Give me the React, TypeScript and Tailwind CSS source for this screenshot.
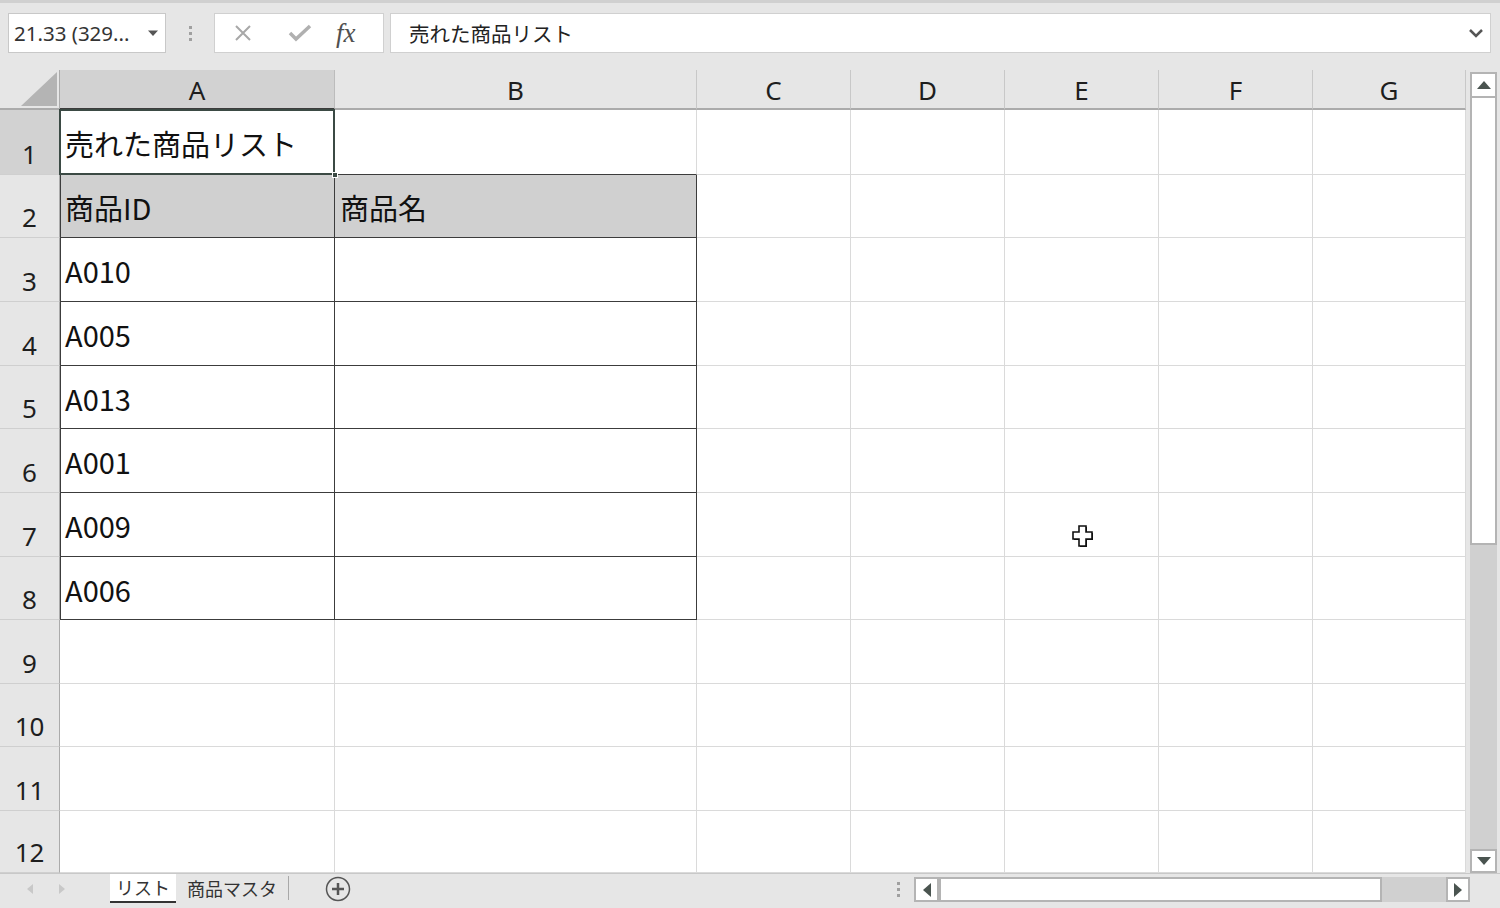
import React from 'react';

const cols = [
  { l: 'A', w: 'w-[275px]' },
  { l: 'B', w: 'w-[362px]' },
  { l: 'C', w: 'w-[154px]' },
  { l: 'D', w: 'w-[154px]' },
  { l: 'E', w: 'w-[154px]' },
  { l: 'F', w: 'w-[154px]' },
  { l: 'G', w: 'w-[153px]' },
];

const rows = [
  { n: 1, h: 'h-[65px]', a: '売れた商品リスト', b: '' },
  { n: 2, h: 'h-[63px]', a: '商品ID', b: '商品名' },
  { n: 3, h: 'h-[64px]', a: 'A010', b: '' },
  { n: 4, h: 'h-[64px]', a: 'A005', b: '' },
  { n: 5, h: 'h-[63px]', a: 'A013', b: '' },
  { n: 6, h: 'h-[64px]', a: 'A001', b: '' },
  { n: 7, h: 'h-[64px]', a: 'A009', b: '' },
  { n: 8, h: 'h-[63px]', a: 'A006', b: '' },
  { n: 9, h: 'h-[64px]', a: '', b: '' },
  { n: 10, h: 'h-[63px]', a: '', b: '' },
  { n: 11, h: 'h-[64px]', a: '', b: '' },
  { n: 12, h: 'h-[62px]', a: '', b: '' },
];

const jp = "font-['Noto_Sans_CJK_JP','Noto_Sans',sans-serif]";
const ui = "font-['Noto_Sans','Noto_Sans_CJK_JP',sans-serif]";

function cellClass(r: number, c: number) {
  const inTable = r >= 2 && r <= 8 && c <= 1;
  let cls = 'box-border shrink-0 flex items-center pl-[5px] pt-[3px] text-[29px] text-[#111] border-r border-b ';
  if (inTable) {
    cls += 'border-[#3c3c3c] ';
    if (c === 0) cls += 'shadow-[inset_1px_0_0_#3c3c3c] ';
    if (r === 2) cls += 'bg-[#d0d0d0] ';
    else cls += 'bg-white ';
  } else if (r === 1 && c === 0) {
    cls += 'border-[#3c3c3c] bg-white relative ';
  } else if (r === 1 && c === 1) {
    cls += 'border-r-[#dadada] border-b-[#3c3c3c] bg-white ';
  } else {
    cls += 'border-[#dadada] bg-white ';
  }
  return cls;
}

function Cross() {
  return (
    <svg width="26" height="26" viewBox="0 0 26 26" className="absolute left-[1070px] top-[523px]">
      <path d="M9 3h7v6h6v7h-6v7H9v-7H3V9h6z" fill="#111" transform="translate(1 1)" />
      <path d="M9 3h7v6h6v7h-6v7H9v-7H3V9h6z" fill="#fff" stroke="#111" strokeWidth="1.6" />
    </svg>
  );
}

export default function App() {
  return (
    <div className={`relative w-[1500px] h-[908px] overflow-hidden bg-[#e6e6e6] flex flex-col ${ui}`}>
      {/* formula bar */}
      <div className="h-[70px] shrink-0 border-t-[3px] border-[#d0d0d0] flex items-start pt-[10px] pl-[8px]">
        <div className="w-[158px] h-[40px] bg-white border border-[#c8c8c8] flex items-center justify-between pl-[5px] pr-[6px]">
          <span className="text-[20.5px] text-[#333]">21.33 (329...</span>
          <svg width="12" height="8" viewBox="0 0 12 8"><path d="M1 1.5h10L6 7z" fill="#555" /></svg>
        </div>
        <div className="w-[48px] h-[40px] flex flex-col items-center justify-center gap-[3px]">
          <span className="w-[3px] h-[3px] bg-[#a0a0a0]" />
          <span className="w-[3px] h-[3px] bg-[#a0a0a0]" />
          <span className="w-[3px] h-[3px] bg-[#a0a0a0]" />
        </div>
        <div className="w-[170px] h-[40px] bg-white border border-[#d0d0d0] flex items-center">
          <svg width="20" height="20" viewBox="0 0 20 20" className="ml-[18px]">
            <path d="M3 3l14 14M17 3L3 17" stroke="#a8a8a8" strokeWidth="2" fill="none" />
          </svg>
          <svg width="24" height="20" viewBox="0 0 24 20" className="ml-[35px]">
            <path d="M2 10l6 6L22 3" stroke="#b0b0b0" strokeWidth="3.5" fill="none" />
          </svg>
          <span className="ml-[24px] text-[27px] leading-none italic text-[#505050] font-['Liberation_Serif',serif]">fx</span>
        </div>
        <div className="ml-[6px] w-[1101px] h-[40px] bg-white border border-[#d0d0d0] flex items-center justify-between pl-[18px] pr-[4px]">
          <span className={`text-[20.5px] text-[#222] ${jp}`}>売れた商品リスト</span>
          <svg width="20" height="14" viewBox="0 0 20 14">
            <path d="M4 4l6 6 6-6" stroke="#555" strokeWidth="2.5" fill="none" />
          </svg>
        </div>
      </div>

      {/* grid + vertical scrollbar */}
      <div className="flex h-[803px] shrink-0">
        <div className="w-[1466px] flex flex-col bg-white">
          {/* column headers */}
          <div className="flex h-[40px] shrink-0 bg-[#e6e6e6]">
            <div className="box-border w-[60px] shrink-0 h-[40px] border-b-2 border-r border-[#ababab] flex items-end justify-end pr-[2px] pb-[2px]">
              <svg width="36" height="34" viewBox="0 0 36 34"><path d="M36 0v34H0z" fill="#b4b4b4" /></svg>
            </div>
            {cols.map((col, i) => (
              <div
                key={col.l}
                className={`box-border ${col.w} h-[40px] shrink-0 flex items-center justify-center pt-[3px] text-[26px] text-[#1e1e1e] border-b-2 ${
                  i === 0 ? 'bg-[#d2d2d2] border-b-[#3c3c3c] border-r border-r-[#bcbcbc]' : 'border-b-[#ababab] border-r border-r-[#c8c8c8]'
                }`}
              >
                {col.l}
              </div>
            ))}
          </div>
          {rows.map((row) => (
            <div key={row.n} className={`flex ${row.h} shrink-0`}>
              <div
                className={`box-border w-[60px] shrink-0 border-r border-r-[#ababab] border-b border-b-[#cfcfcf] flex items-end justify-center text-[26px] text-[#1e1e1e] ${
                  row.n === 1 ? 'bg-[#d2d2d2]' : 'bg-[#e6e6e6]'
                }`}
              >
                {row.n}
              </div>
              {cols.map((col, c) => (
                <div key={col.l} className={`${col.w} ${cellClass(row.n, c)} ${jp}`}>
                  {c === 0 ? row.a : c === 1 ? row.b : ''}
                  {row.n === 1 && c === 0 && (
                    <>
                      <div className="absolute -left-[1px] -top-[1px] -right-[1px] -bottom-[1px] border-2 border-[#3b4a44]" />
                      <div className="absolute -right-[4px] -bottom-[4px] w-[6px] h-[6px] bg-[#3b4a44] border border-white" />
                    </>
                  )}
                </div>
              ))}
            </div>
          ))}
        </div>
        {/* vertical scrollbar */}
        <div className="w-[34px] bg-[#e6e6e6] flex flex-col pl-[4px] pr-[3px] pt-[2px]">
          <div className="h-[26px] bg-white border-2 border-[#b4b4b4] flex items-center justify-center">
            <svg width="14" height="8" viewBox="0 0 14 8"><path d="M0 8L7 0l7 8z" fill="#4a5450" /></svg>
          </div>
          <div className="h-[449px] bg-white border-2 border-[#b4b4b4] -mt-[2px]" />
          <div className="flex-1 bg-[#d0d0d0]" />
          <div className="h-[24px] bg-white border-2 border-[#b4b4b4] flex items-center justify-center">
            <svg width="14" height="8" viewBox="0 0 14 8"><path d="M0 0h14L7 8z" fill="#4a5450" /></svg>
          </div>
        </div>
      </div>

      {/* sheet tabs */}
      <div className="h-[35px] shrink-0 border-t border-[#c8c8c8] flex items-start relative">
        <div className="w-[110px] h-[30px] flex items-center">
          <svg width="10" height="12" viewBox="0 0 10 12" className="ml-[25px]"><path d="M8 1L2 6l6 5z" fill="#c8c8c8" /></svg>
          <svg width="10" height="12" viewBox="0 0 10 12" className="ml-[22px]"><path d="M2 1l6 5-6 5z" fill="#c8c8c8" /></svg>
        </div>
        <div className={`w-[66px] h-[29px] bg-white border-b-2 border-[#333] flex items-center justify-center text-[18px] text-[#333] ${jp}`}>リスト</div>
        <div className={`w-[112px] h-[29px] flex items-center justify-center text-[18px] text-[#333] ${jp}`}>商品マスタ</div>
        <div className="w-[1px] h-[24px] bg-[#a8a8a8] mt-[2px]" />
        <svg width="26" height="26" viewBox="0 0 26 26" className="ml-[36px] mt-[2px]">
          <circle cx="13" cy="13" r="11.5" stroke="#555" strokeWidth="1.5" fill="none" />
          <path d="M13 7v12M7 13h12" stroke="#555" strokeWidth="2.5" />
        </svg>
        <div className="ml-[546px] mt-[8px] flex flex-col gap-[3px]">
          <span className="w-[3px] h-[3px] bg-[#a0a0a0]" />
          <span className="w-[3px] h-[3px] bg-[#a0a0a0]" />
          <span className="w-[3px] h-[3px] bg-[#a0a0a0]" />
        </div>
        <div className="ml-[14px] mt-[3px] w-[556px] h-[25px] flex">
          <div className="w-[25px] h-[25px] bg-white border-2 border-[#b4b4b4] flex items-center justify-center">
            <svg width="8" height="14" viewBox="0 0 8 14"><path d="M8 0v14L0 7z" fill="#4a5450" /></svg>
          </div>
          <div className="w-[443px] h-[25px] bg-white border-2 border-[#b4b4b4]" />
          <div className="flex-1 h-[25px] bg-[#d0d0d0]" />
          <div className="w-[24px] h-[25px] bg-white border-2 border-[#b4b4b4] flex items-center justify-center">
            <svg width="8" height="14" viewBox="0 0 8 14"><path d="M0 0v14l8-7z" fill="#4a5450" /></svg>
          </div>
        </div>
      </div>

      <Cross />
    </div>
  );
}
